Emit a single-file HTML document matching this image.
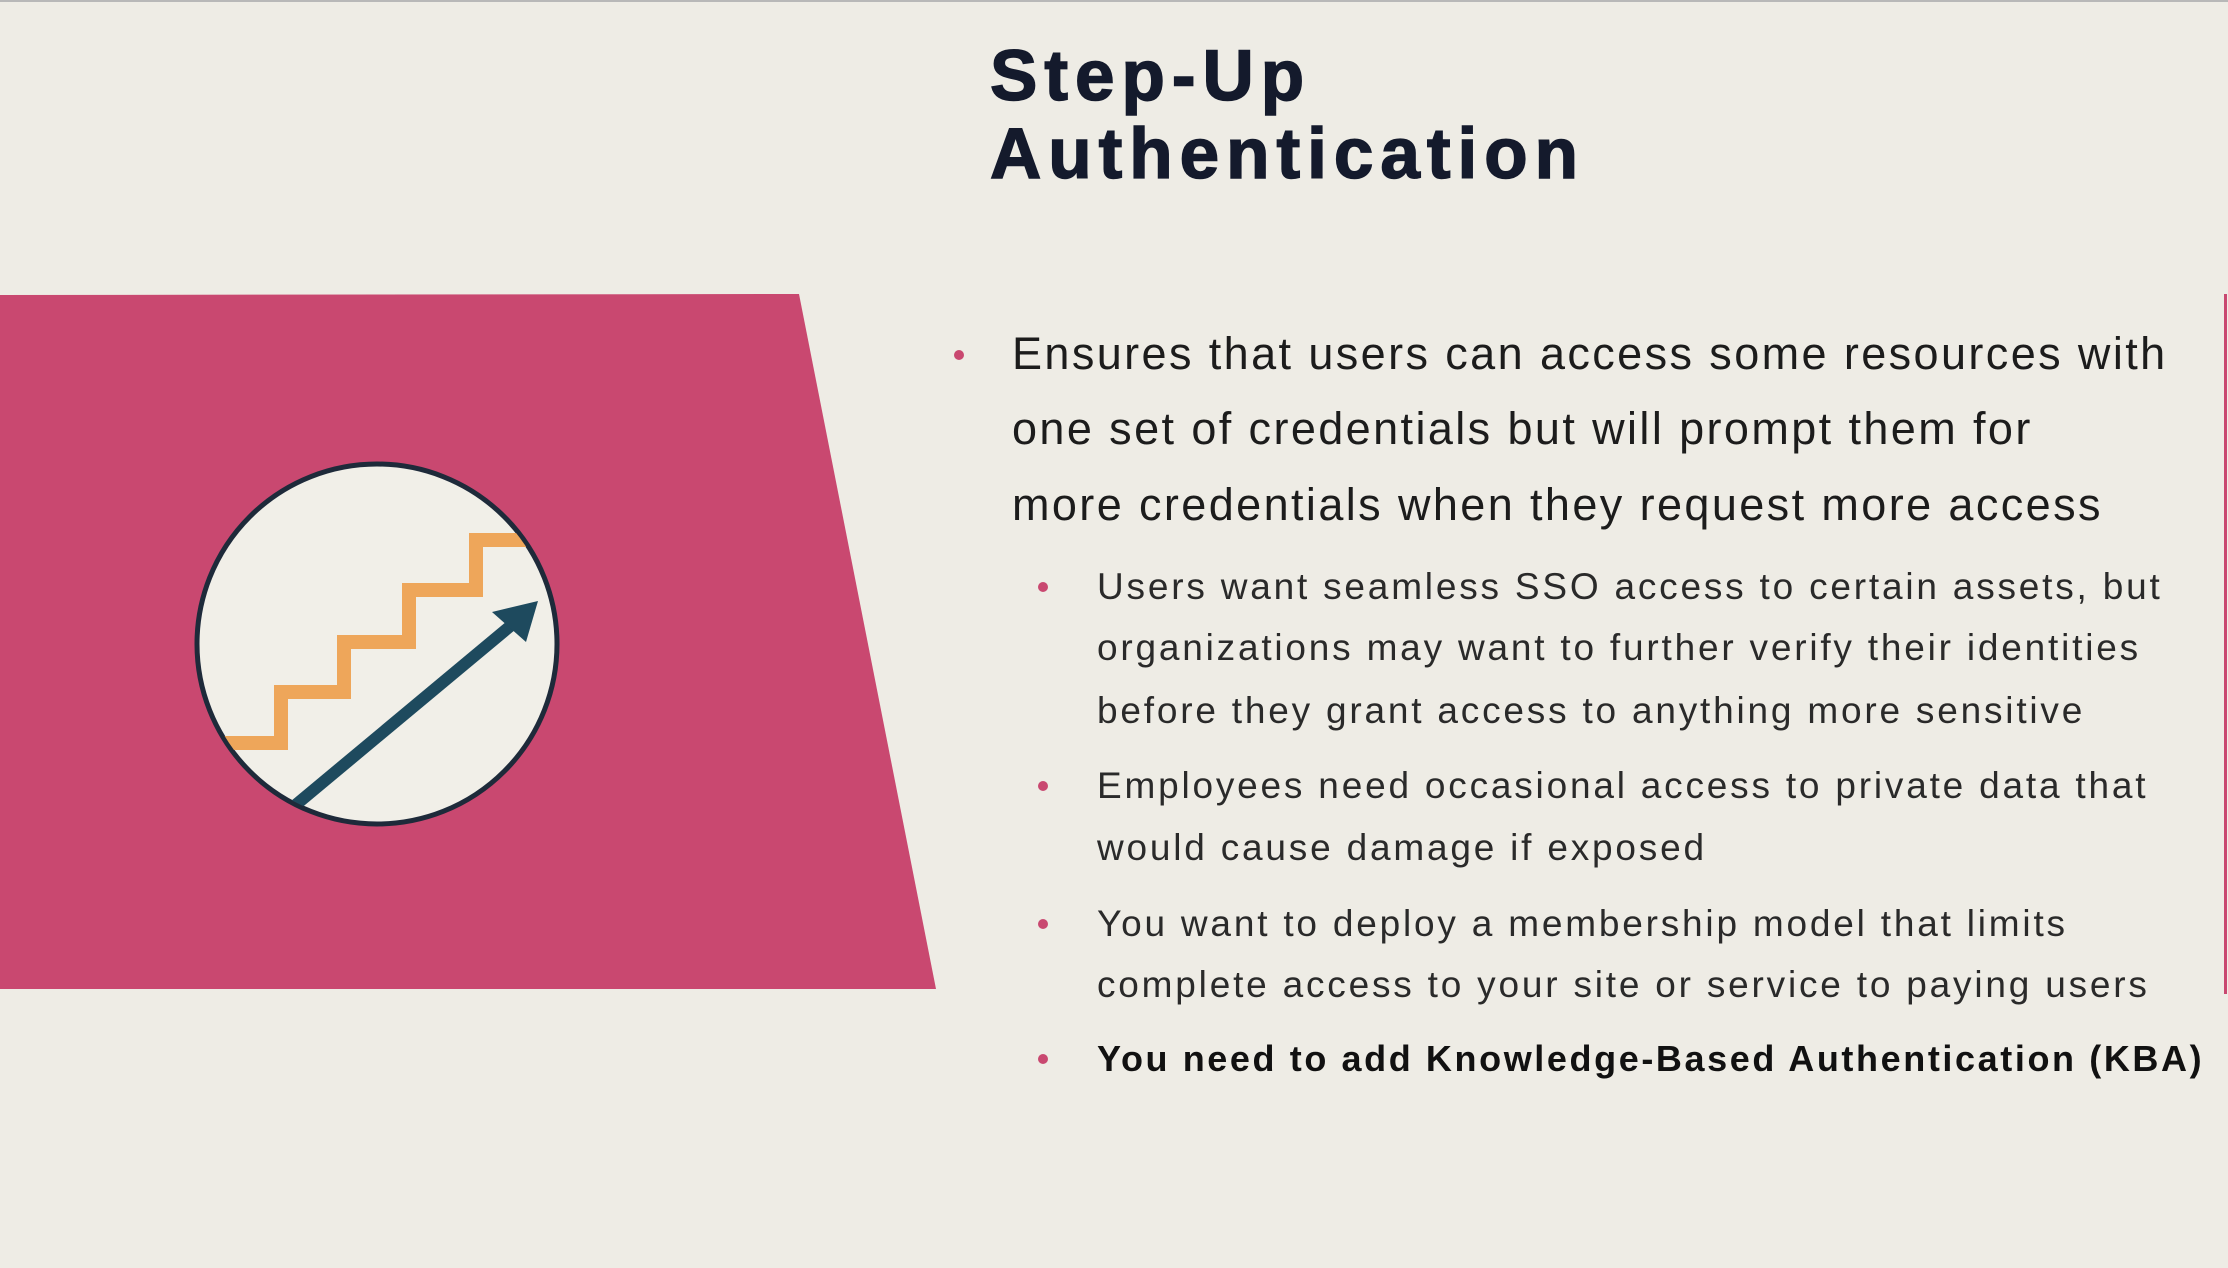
<!DOCTYPE html>
<html><head><meta charset="utf-8"><style>
html,body{margin:0;padding:0}
body{width:2228px;height:1268px;background:#eeece5;position:relative;overflow:hidden;font-family:"Liberation Sans",sans-serif;color:#1c1c1c}
.t{position:absolute;white-space:nowrap}
h1{position:absolute;left:990px;top:38px;margin:0;font-size:71px;line-height:78px;font-weight:bold;color:#141a2c;letter-spacing:7px;-webkit-text-stroke:1.5px #141a2c}
.m{font-size:45px;left:1012px;letter-spacing:2.4px}
.s{font-size:37px;left:1097px;color:#2a2a2a;letter-spacing:2.8px}
.d{position:absolute;width:10px;height:10px;border-radius:50%;background:#c94870}
</style></head><body>
<div style="position:absolute;left:0;top:0;width:2228px;height:2px;background:#b8b8b8"></div>
<svg style="position:absolute;left:0;top:0" width="2228" height="1268">
<polygon points="0,295 799,294 936,989 0,989" fill="#c94870"/>
<rect x="2224" y="294" width="3" height="700" fill="#c94870"/>
<defs><clipPath id="c"><circle cx="377" cy="644" r="178"/></clipPath></defs>
<circle cx="377" cy="644" r="180" fill="#f1efe8" stroke="#1e2a3a" stroke-width="5"/>
<g clip-path="url(#c)">
<polyline points="200,743 281,743 281,692 344,692 344,642 409,642 409,590 476,590 476,540 560,540" fill="none" stroke="#eea65a" stroke-width="14"/>
<line x1="280" y1="818" x2="520" y2="618" stroke="#1e4a5e" stroke-width="12"/>
<polygon points="538,601 492,612 526,642" fill="#1e4a5e"/>
</g>
</svg>
<h1>Step-Up<br>Authentication</h1>
<div class="d" style="left:954px;top:350px"></div>
<div class="t m" style="top:328px">Ensures that users can access some resources with</div>
<div class="t m" style="top:403px">one set of credentials but will prompt them for</div>
<div class="t m" style="top:479px">more credentials when they request more access</div>
<div class="d" style="left:1038px;top:582px"></div>
<div class="t s" style="top:566px">Users want seamless SSO access to certain assets, but</div>
<div class="t s" style="top:627px">organizations may want to further verify their identities</div>
<div class="t s" style="top:690px">before they grant access to anything more sensitive</div>
<div class="d" style="left:1038px;top:781px"></div>
<div class="t s" style="top:765px">Employees need occasional access to private data that</div>
<div class="t s" style="top:827px">would cause damage if exposed</div>
<div class="d" style="left:1038px;top:919px"></div>
<div class="t s" style="top:903px">You want to deploy a membership model that limits</div>
<div class="t s" style="top:964px">complete access to your site or service to paying users</div>
<div class="d" style="left:1038px;top:1054px"></div>
<div class="t s" style="top:1038px;font-weight:bold;color:#111;font-size:36px;letter-spacing:2.6px">You need to add Knowledge-Based Authentication (KBA)</div>
</body></html>
